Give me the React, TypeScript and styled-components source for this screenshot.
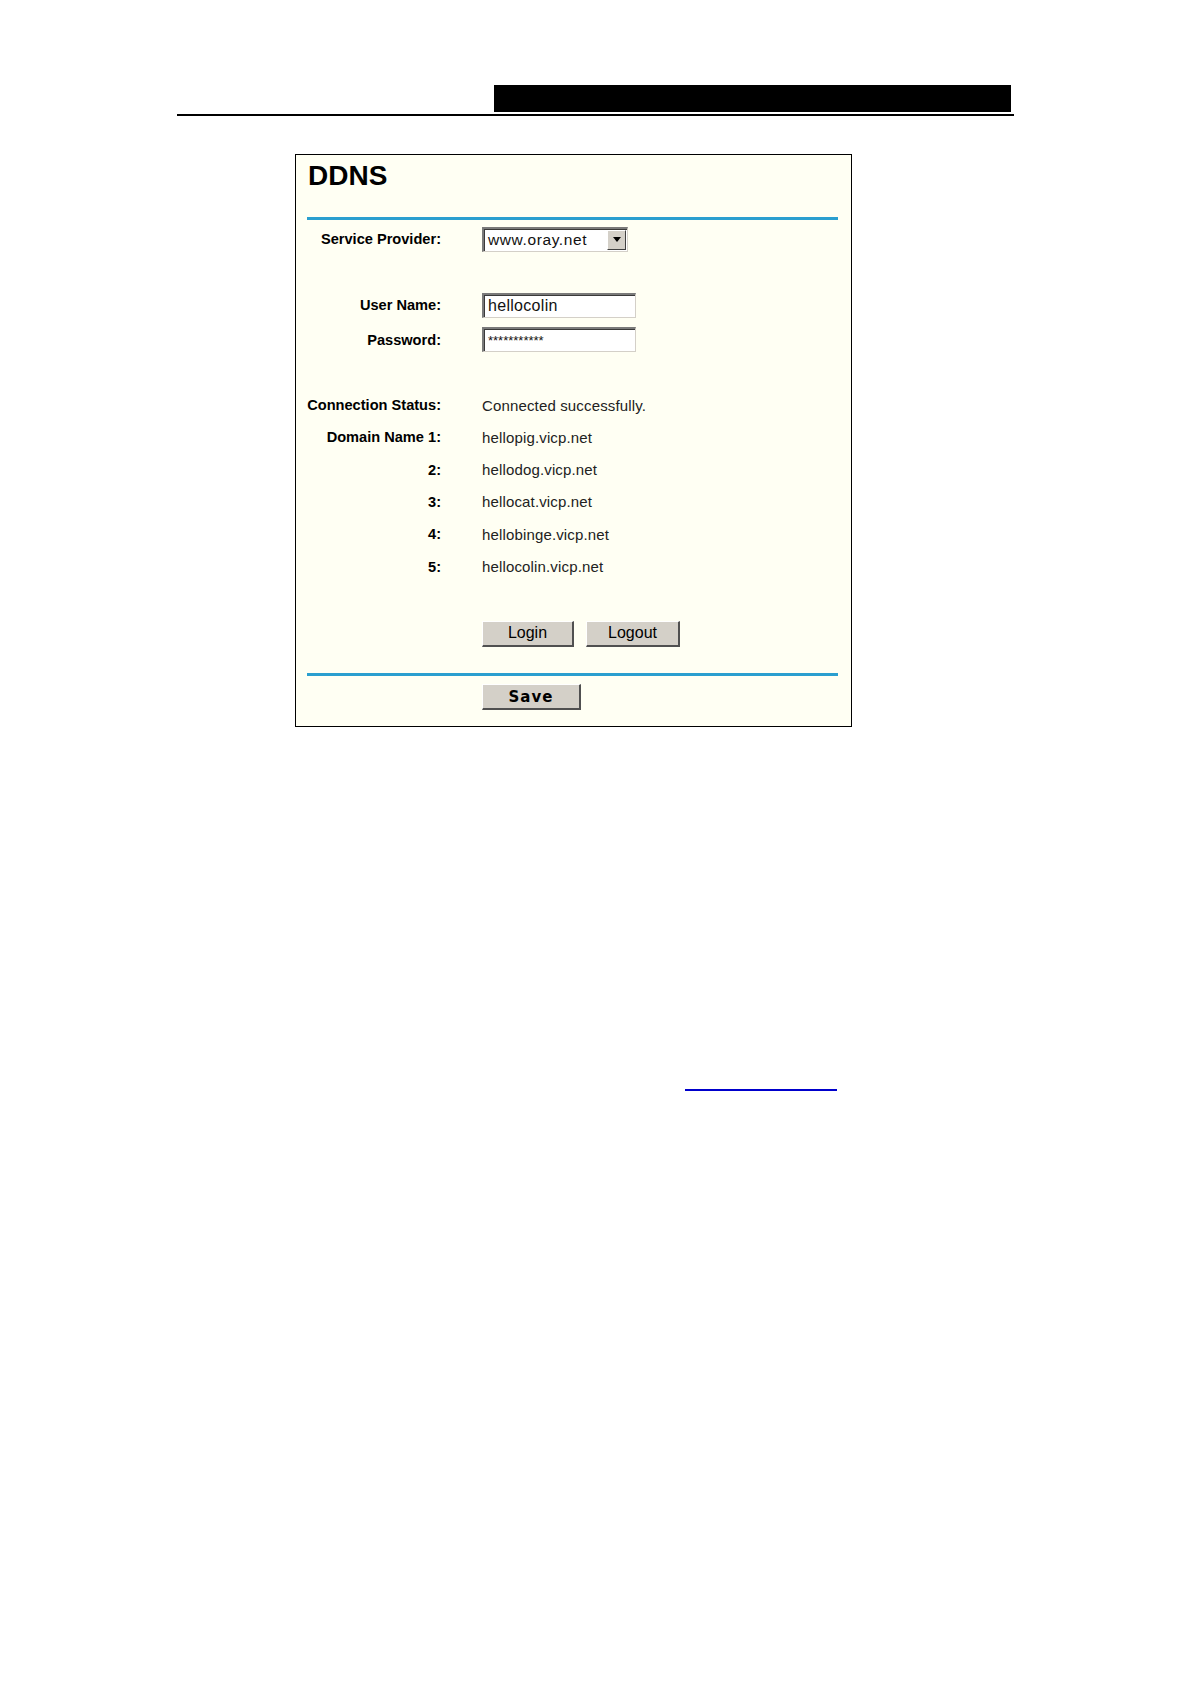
import * as React from "react";
import styled, { createGlobalStyle } from "styled-components";

const GlobalStyle = createGlobalStyle`
  html, body {
    margin: 0;
    padding: 0;
    background: #ffffff;
  }
  body {
    font-family: "Liberation Sans", Arial, sans-serif;
  }
`;

const Page = styled.div`
  width: 1190px;
  min-height: 1684px;
  padding-top: 85px;
  box-sizing: border-box;
`;

const Header = styled.header`
  margin-left: 177px;
  width: 837px;
  display: flex;
  flex-direction: column;
  align-items: flex-end;
`;

const HeaderBar = styled.div`
  width: 517px;
  height: 27px;
  margin-right: 3px;
  background: #000;
`;

const HeaderRule = styled.div`
  align-self: stretch;
  height: 2px;
  margin-top: 2px;
  background: #000;
`;

const Panel = styled.section`
  margin: 38px 0 0 295px;
  width: 557px;
  height: 573px;
  box-sizing: border-box;
  border: 1px solid #000;
  background: #fffff3;
  padding: 5px 13px 0 11px;
`;

const Title = styled.h1`
  margin: 0 0 0 1px;
  font-family: "Liberation Sans", Arial, sans-serif;
  font-weight: bold;
  font-size: 28px;
  line-height: 32px;
  color: #000;
`;

const Divider = styled.div<{ $mt: number }>`
  height: 3px;
  margin-top: ${(p) => p.$mt}px;
  background: #2a9fcf;
`;

const Row = styled.div<{ $mt?: number }>`
  display: grid;
  grid-template-columns: 134px 1fr;
  column-gap: 41px;
  align-items: center;
  height: 32.3px;
  margin-top: ${(p) => p.$mt ?? 0}px;
`;

const Label = styled.div`
  text-align: right;
  font-weight: bold;
  font-size: 14.6px;
  color: #000;
  white-space: nowrap;
`;

const Value = styled.div`
  font-size: 15px;
  letter-spacing: 0.15px;
  color: #222;
  white-space: nowrap;
`;

const inset = `
  border-top: 2px solid #7a7a7a;
  border-left: 2px solid #7a7a7a;
  border-bottom: 1px solid #d4d0c8;
  border-right: 1px solid #d4d0c8;
  box-shadow: inset 1px 1px 0 #3a3a3a;
`;

const SelectBox = styled.div`
  ${inset}
  width: 146px;
  height: 25px;
  box-sizing: border-box;
  background: #fff;
  display: flex;
  align-items: center;
  justify-content: space-between;
`;

const SelectText = styled.span`
  padding-left: 4px;
  font-size: 15.5px;
  letter-spacing: 0.6px;
  color: #111;
`;

const SelectArrow = styled.span`
  width: 19px;
  height: 20px;
  margin-right: 1px;
  box-sizing: border-box;
  background: #d4d0c8;
  border-top: 1px solid #fff;
  border-left: 1px solid #fff;
  border-bottom: 1px solid #404040;
  border-right: 1px solid #404040;
  display: flex;
  align-items: center;
  justify-content: center;
`;

const TextField = styled.div<{ $small?: boolean }>`
  ${inset}
  width: 154px;
  height: 25px;
  box-sizing: border-box;
  background: #fff;
  padding-left: 4px;
  display: flex;
  align-items: center;
  font-size: ${(p) => (p.$small ? 13 : 16)}px;
  letter-spacing: ${(p) => (p.$small ? 0 : 0.3)}px;
  color: #111;
`;

const Buttons = styled.div`
  display: flex;
  gap: 12px;
`;

const Button = styled.button<{ $w: number; $bold?: boolean }>`
  width: ${(p) => p.$w}px;
  height: 26px;
  padding: 0;
  box-sizing: border-box;
  background: #d4d0c8;
  border-top: 1px solid #ffffff;
  border-left: 1px solid #ffffff;
  border-bottom: 2px solid #505050;
  border-right: 2px solid #505050;
  font-family: ${(p) =>
    p.$bold ? '"DejaVu Sans", Verdana, sans-serif' : '"Liberation Sans", Arial, sans-serif'};
  font-weight: ${(p) => (p.$bold ? "bold" : "normal")};
  font-size: ${(p) => (p.$bold ? 15 : 16)}px;
  letter-spacing: ${(p) => (p.$bold ? 1 : 0)}px;
  color: #000;
`;

const LinkLine = styled.div`
  margin: 362px 0 0 685px;
  width: 152px;
  height: 2px;
  background: #0000cc;
`;

const domains = [
  "hellopig.vicp.net",
  "hellodog.vicp.net",
  "hellocat.vicp.net",
  "hellobinge.vicp.net",
  "hellocolin.vicp.net",
];

export default function App() {
  return (
    <Page>
      <GlobalStyle />
      <Header>
        <HeaderBar />
        <HeaderRule />
      </Header>

      <Panel>
        <Title>DDNS</Title>
        <Divider $mt={25} />

        <Row $mt={3}>
          <Label>Service Provider:</Label>
          <SelectBox>
            <SelectText>www.oray.net</SelectText>
            <SelectArrow>
              <svg width="8" height="5" viewBox="0 0 8 5">
                <path d="M0 0h8L4 5z" fill="#000" />
              </svg>
            </SelectArrow>
          </SelectBox>
        </Row>

        <Row $mt={34}>
          <Label>User Name:</Label>
          <TextField>hellocolin</TextField>
        </Row>
        <Row $mt={2}>
          <Label>Password:</Label>
          <TextField $small>***********</TextField>
        </Row>

        <Row $mt={33}>
          <Label>Connection Status:</Label>
          <Value>Connected successfully.</Value>
        </Row>
        {domains.map((d, i) => (
          <Row key={d}>
            <Label>{i === 0 ? "Domain Name 1:" : `${i + 1}:`}</Label>
            <Value>{d}</Value>
          </Row>
        ))}

        <Row $mt={35}>
          <span />
          <Buttons>
            <Button $w={92}>Login</Button>
            <Button $w={94}>Logout</Button>
          </Buttons>
        </Row>

        <Divider $mt={23} />

        <Row $mt={5}>
          <span />
          <div>
            <Button $w={99} $bold>
              Save
            </Button>
          </div>
        </Row>
      </Panel>

      <LinkLine />
    </Page>
  );
}
